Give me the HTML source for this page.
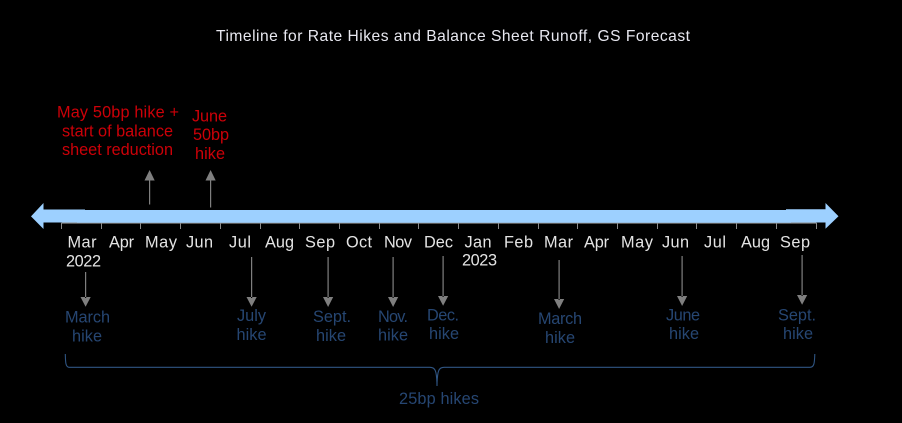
<!DOCTYPE html>
<html lang="en">
<head>
<meta charset="utf-8">
<title>Timeline for Rate Hikes and Balance Sheet Runoff, GS Forecast</title>
<style>
html,body{margin:0;padding:0;background:#000;width:902px;height:423px;overflow:hidden}
svg{display:block;filter:blur(0.35px)}
text{font-family:"Liberation Sans",Arial,sans-serif;font-size:16.3px}
.t{font-size:15.6px;fill:#e8e8f0}
.m{fill:#e4e4e4}
.r{fill:#cc0008}
.b{fill:#264672}
</style>
</head>
<body>
<svg width="902" height="423" viewBox="0 0 902 423" xmlns="http://www.w3.org/2000/svg">
<rect width="902" height="423" fill="#000"/>
<text class="t" x="216" y="41" textLength="474">Timeline for Rate Hikes and Balance Sheet Runoff, GS Forecast</text>

<text class="r" x="57" y="117.5" textLength="122">May 50bp hike +</text>
<text class="r" x="62" y="136.5" textLength="111">start of balance</text>
<text class="r" x="62" y="155" textLength="111">sheet reduction</text>
<text class="r" x="192" y="121.5" textLength="35">June</text>
<text class="r" x="193" y="140" textLength="36">50bp</text>
<text class="r" x="195" y="159" textLength="30">hike</text>

<g fill="#7f7f7f" stroke="none">
<path d="M149 180h1.2v24.5h-1.2zM144.5 180.5L149.6 170L154.7 180.5z"/>
<path d="M210 180h1.2v27.5h-1.2zM205.5 180.5L210.6 170L215.7 180.5z"/>
<path d="M85 272h1.2v26h-1.2zM80.5 297L85.6 306.7L90.7 297z"/>
<path d="M251 257h1.2v41h-1.2zM246.5 297L251.6 306.7L256.7 297z"/>
<path d="M327.5 257h1.2v41h-1.2zM323 297L328.1 307L333.2 297z"/>
<path d="M392.5 257h1.2v41h-1.2zM388 297L393.1 307L398.2 297z"/>
<path d="M442.5 256h1.2v41h-1.2zM438 296L443.1 305.7L448.2 296z"/>
<path d="M558.5 260h1.2v40h-1.2zM554 299L559.1 309L564.2 299z"/>
<path d="M681.5 256h1.2v41h-1.2zM677 296L682.1 306L687.2 296z"/>
<path d="M801.5 255h1.2v41h-1.2zM797 295L802.1 304.7L807.2 295z"/>
</g>

<path d="M61.5 223H816.5" stroke="#8c8c8c" stroke-width="1.2" fill="none"/>
<g stroke="#8c8c8c" stroke-width="1" fill="none">
<path d="M61.5 223v6M101.5 223v6M140.5 223v6M180.5 223v6M220.5 223v6M260.5 223v6M299.5 223v6M339.5 223v6M379.5 223v6M418.5 223v6M458.5 223v6M498.5 223v6M538.5 223v6M577.5 223v6M617.5 223v6M657.5 223v6M696.5 223v6M736.5 223v6M776.5 223v6M816.5 223v6"/>
</g>
<path d="M31 216.4L43.5 203V209.5H85V210H786V209.3H825.5V203L838.5 216.3L825.5 228.8V222.5H791V222.8H77V222.5H43.5V229Z" fill="#9dd0ff"/>

<text class="m" x="67.5" y="247.5" textLength="29">Mar</text>
<text class="m" x="109" y="247.5" textLength="25">Apr</text>
<text class="m" x="145" y="247.5" textLength="32">May</text>
<text class="m" x="186" y="247.5" textLength="27">Jun</text>
<text class="m" x="229" y="247.5" textLength="22">Jul</text>
<text class="m" x="265" y="247.5" textLength="29">Aug</text>
<text class="m" x="305" y="247.5" textLength="30">Sep</text>
<text class="m" x="346" y="247.5" textLength="26">Oct</text>
<text class="m" x="384" y="247.5" textLength="28">Nov</text>
<text class="m" x="424" y="247.5" textLength="29">Dec</text>
<text class="m" x="464.5" y="247.5" textLength="27">Jan</text>
<text class="m" x="504" y="247.5" textLength="29">Feb</text>
<text class="m" x="544" y="247.5" textLength="29">Mar</text>
<text class="m" x="584" y="247.5" textLength="25">Apr</text>
<text class="m" x="621" y="247.5" textLength="32">May</text>
<text class="m" x="662" y="247.5" textLength="27">Jun</text>
<text class="m" x="704" y="247.5" textLength="22">Jul</text>
<text class="m" x="741" y="247.5" textLength="29">Aug</text>
<text class="m" x="780" y="247.5" textLength="30">Sep</text>
<text class="m" x="66" y="266.5" textLength="35">2022</text>
<text class="m" x="462" y="265.5" textLength="35">2023</text>

<text class="b" x="65" y="322.5" textLength="45">March</text>
<text class="b" x="72" y="341.5" textLength="30">hike</text>
<text class="b" x="237" y="321" textLength="29">July</text>
<text class="b" x="236.5" y="340" textLength="30">hike</text>
<text class="b" x="313" y="322" textLength="38">Sept.</text>
<text class="b" x="316" y="341" textLength="30">hike</text>
<text class="b" x="378" y="322" textLength="30">Nov.</text>
<text class="b" x="378" y="340.5" textLength="30">hike</text>
<text class="b" x="427" y="320.5" textLength="32">Dec.</text>
<text class="b" x="429" y="339" textLength="30">hike</text>
<text class="b" x="538" y="324" textLength="44">March</text>
<text class="b" x="545" y="343" textLength="30">hike</text>
<text class="b" x="666" y="320.5" textLength="34">June</text>
<text class="b" x="669" y="339" textLength="30">hike</text>
<text class="b" x="778" y="320.5" textLength="38">Sept.</text>
<text class="b" x="783" y="339" textLength="30">hike</text>
<text class="b" x="399" y="404" textLength="80">25bp hikes</text>

<path d="M65.3 354C65.5 362 65.5 367 69 367.3H430C435 367.3 436.8 370 437 386C437.2 370 439 367.3 444 367.3H810C814.5 367.3 814.5 362 814.8 354" stroke="#2f5583" stroke-width="1.1" fill="none"/>
</svg>
</body>
</html>
